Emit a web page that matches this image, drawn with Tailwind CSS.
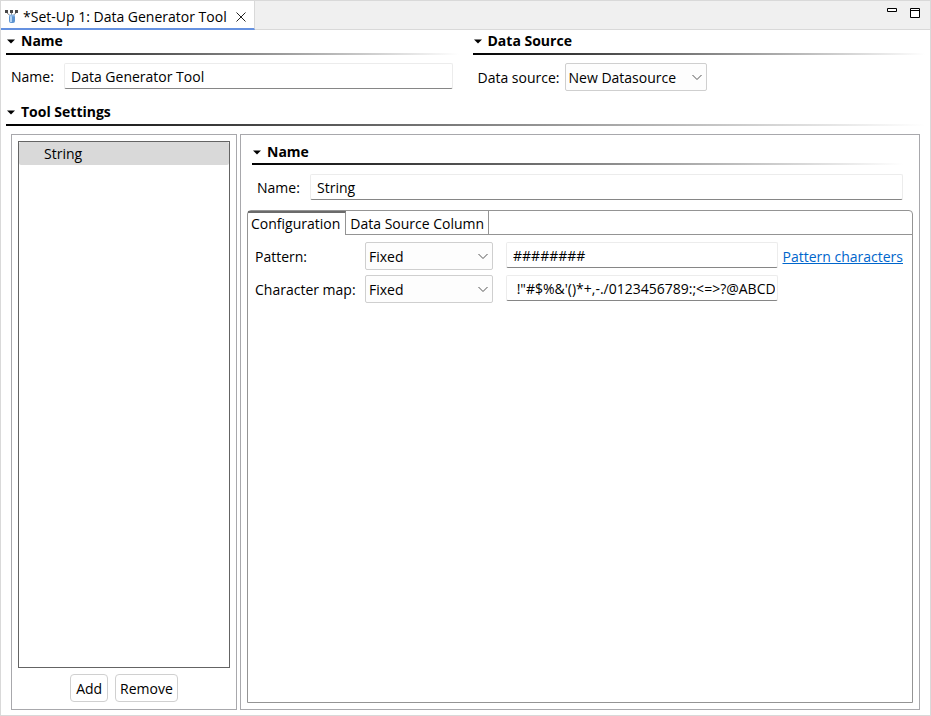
<!DOCTYPE html>
<html lang="en">
<head>
    <meta charset="UTF-8">
    <meta name="viewport" content="width=device-width, initial-scale=1.0">
    <title>Set-Up 1: Data Generator Tool</title>
    <script src="https://cdn.jsdelivr.net/npm/@tailwindcss/browser@4"></script>
</head>
<body class="bg-white text-black text-[14px] leading-5 font-['Open_Sans',sans-serif]">
    <div class="flex flex-col min-h-screen border border-[#d9d9d9]">
        <!-- Editor tabs -->
        <header class="flex h-[29px] bg-[#f0f0f0] border-b border-[#d9d9d9]">
            <div class="flex items-center h-[29px] pl-[3px] pr-1.5 pt-1 bg-white border-r border-r-[#d9d9d9] border-b-2 border-b-[#6591e0]">
                <svg class="w-4 h-4 mr-[3px]" viewBox="0 0 16 16" aria-hidden="true">
                    <path d="M3 4 6 6.500M7.500 4V6M12 4 9 6.500" stroke="#8a8a8a" fill="none"/>
                    <path d="M1 1h3v3H1zM6 1h3v3H6zM11 1h3v3h-3z" fill="#484848"/>
                    <rect x="5" y="6" width="6" height="8" rx="2" fill="#5d94d0"/>
                    <rect x="6" y="7" width="2" height="6" fill="#b4d4f4"/>
                    <ellipse cx="8" cy="6.500" rx="3" ry="1" fill="#8bb7e6"/>
                </svg>
                <a href="#editor">*Set-Up 1: Data Generator Tool</a>
                <button class="ml-[7px]" aria-label="Close">
                    <svg class="w-3.5 h-3.5" viewBox="0 0 14 14"><path d="M2.500 2.500l9 9M11.500 2.500l-9 9" stroke="#222" fill="none"/></svg>
                </button>
            </div>
            <div class="ml-auto mr-[9px] flex items-start gap-[11px] pt-1.5">
                <button aria-label="Minimize">
                    <svg class="w-3 h-3" viewBox="0 0 12 12"><path d="M1.500 1.500h9v3h-9z" fill="#fff" stroke="#000"/></svg>
                </button>
                <button aria-label="Maximize">
                    <svg class="w-3 h-3" viewBox="0 0 12 12"><path d="M1.500 1.500h9v9h-9zM1.500 3.500h9" fill="#fff" stroke="#000"/></svg>
                </button>
            </div>
        </header>

        <main id="editor" class="flex flex-col flex-grow px-[5px] pb-[5px]">
            <div class="grid grid-cols-2 gap-x-3.5">
                <!-- Name -->
                <section>
                    <h2 class="font-bold">
                        <button class="flex items-center h-[23px] pb-0.5 gap-[5px]" aria-expanded="true">
                            <svg class="w-2.5 h-2.5" viewBox="0 0 10 10"><path d="M1 3.500h8L5 7.500z"/></svg>
                            Name
                        </button>
                    </h2>
                    <div class="h-0.5 bg-linear-to-r/srgb from-black to-white"></div>
                    <div class="flex items-center pt-2 pl-[5px] pr-1.5">
                        <label for="toolName" class="w-[53px] pt-0.5">Name:</label>
                        <input id="toolName" type="text" value="Data Generator Tool"
                            class="flex-grow min-w-0 h-[26px] px-1.5 border border-[#ececec] border-b-[#868686] rounded-xs">
                    </div>
                </section>

                <!-- Data source -->
                <section>
                    <h2 class="font-bold">
                        <button class="flex items-center h-[23px] pb-0.5 gap-[5px]" aria-expanded="true">
                            <svg class="w-2.5 h-2.5" viewBox="0 0 10 10"><path d="M1 3.500h8L5 7.500z"/></svg>
                            Data Source
                        </button>
                    </h2>
                    <div class="h-0.5 bg-linear-to-r/srgb from-black to-white"></div>
                    <div class="flex items-center pt-2 pl-[5px]">
                        <label for="dataSource" class="w-[87px] pt-0.5">Data source:</label>
                        <div class="relative">
                            <select id="dataSource" class="appearance-none w-[142px] h-7 px-[3px] pt-px bg-[#fdfdfd] border border-[#cfcfcf] rounded-xs">
                                <option>New Datasource</option>
                            </select>
                            <svg class="absolute right-1 top-2 w-3 h-3 pointer-events-none" viewBox="0 0 12 12"><path d="M1.500 4 6 8.500 10.500 4" fill="none" stroke="#555"/></svg>
                        </div>
                    </div>
                </section>
            </div>

            <!-- Tool settings -->
            <section class="flex flex-col flex-grow pt-2.5">
                <h2 class="font-bold">
                    <button class="flex items-center h-[23px] pb-0.5 gap-[5px]" aria-expanded="true">
                        <svg class="w-2.5 h-2.5" viewBox="0 0 10 10"><path d="M1 3.500h8L5 7.500z"/></svg>
                        Tool Settings
                    </button>
                </h2>
                <div class="h-0.5 bg-linear-to-r/srgb from-black to-white"></div>

                <div class="flex flex-grow gap-[3px] pt-2 px-[5px]">
                    <div class="flex flex-col w-[226px] p-1.5 pb-[7px] border border-[#a8a8ac]">
                        <ul class="flex-grow border border-[#646464]">
                            <li class="h-[23px] pl-[25px] leading-6 bg-[#d9d9d9] rounded-xs">String</li>
                        </ul>
                        <div class="flex justify-center gap-[7px] pt-1.5">
                            <button class="h-7 px-[5px] pt-px border border-[#d0d0d0] rounded">Add</button>
                            <button class="h-7 px-1 pt-px border border-[#d0d0d0] rounded">Remove</button>
                        </div>
                    </div>

                    <div class="flex flex-col flex-grow p-1.5 pt-[5px] border border-[#a8a8ac]">
                        <section class="pl-[5px] pr-2.5">
                            <h3 class="font-bold">
                                <button class="flex items-center h-[23px] gap-[5px]" aria-expanded="true">
                                    <svg class="w-2.5 h-2.5" viewBox="0 0 10 10"><path d="M1 3.500h8L5 7.500z"/></svg>
                                    Name
                                </button>
                            </h3>
                            <div class="h-0.5 bg-linear-to-r/srgb from-black to-white"></div>
                            <div class="flex items-center pt-[9px] pb-2.5 pl-[5px]">
                                <label for="columnName" class="w-[53px] pt-0.5">Name:</label>
                                <input id="columnName" type="text" value="String"
                                    class="flex-grow min-w-0 h-[26px] px-1.5 border border-[#ececec] border-b-[#868686] rounded-xs">
                            </div>
                        </section>

                        <div class="flex flex-col flex-grow border border-[#949494] rounded-t">
                            <div class="flex h-6" role="tablist">
                                <button role="tab" aria-selected="true" class="pl-[3px] pr-[5px] border-t-2 border-t-[#6b6b6b] border-r border-r-[#949494]">Configuration</button>
                                <button role="tab" aria-selected="false" class="px-1 pt-0.5 border-r border-b border-[#949494]">Data Source Column</button>
                                <div class="flex-grow border-b border-[#949494]"></div>
                            </div>
                            <div class="grid grid-cols-[110px_128px_minmax(0,1fr)_auto] gap-y-[5px] items-center pt-[7px] pl-[7px] pr-[9px]">
                                <label for="pattern" class="pt-0.5">Pattern:</label>
                                <div class="relative">
                                    <select id="pattern" class="appearance-none w-full h-7 px-[3px] pt-px bg-[#fdfdfd] border border-[#cfcfcf] rounded-xs">
                                        <option>Fixed</option>
                                    </select>
                                    <svg class="absolute right-1 top-2 w-3 h-3 pointer-events-none" viewBox="0 0 12 12"><path d="M1.500 4 6 8.500 10.500 4" fill="none" stroke="#555"/></svg>
                                </div>
                                <input type="text" value="########" aria-label="Pattern value"
                                    class="self-start min-w-0 h-[26px] ml-[13px] mr-1 px-1.5 border border-[#ececec] border-b-[#868686] rounded-xs">
                                <a href="#pattern" class="pt-0.5 text-[#0066cc] underline">Pattern characters</a>

                                <label for="charMap" class="pt-0.5">Character map:</label>
                                <div class="relative">
                                    <select id="charMap" class="appearance-none w-full h-7 px-[3px] pt-px bg-[#fdfdfd] border border-[#cfcfcf] rounded-xs">
                                        <option>Fixed</option>
                                    </select>
                                    <svg class="absolute right-1 top-2 w-3 h-3 pointer-events-none" viewBox="0 0 12 12"><path d="M1.500 4 6 8.500 10.500 4" fill="none" stroke="#555"/></svg>
                                </div>
                                <input type="text" value=" !&quot;#$%&amp;'()*+,-./0123456789:;&lt;=&gt;?@ABCDEFGHIJKLMNOPQRSTUVWXYZ" aria-label="Character map value"
                                    class="self-start min-w-0 h-[26px] ml-[13px] mr-1 pl-1.5 pr-0.5 border border-[#ececec] border-b-[#868686] rounded-xs">
                            </div>
                        </div>
                    </div>
                </div>
            </section>
        </main>
    </div>
</body>
</html>
